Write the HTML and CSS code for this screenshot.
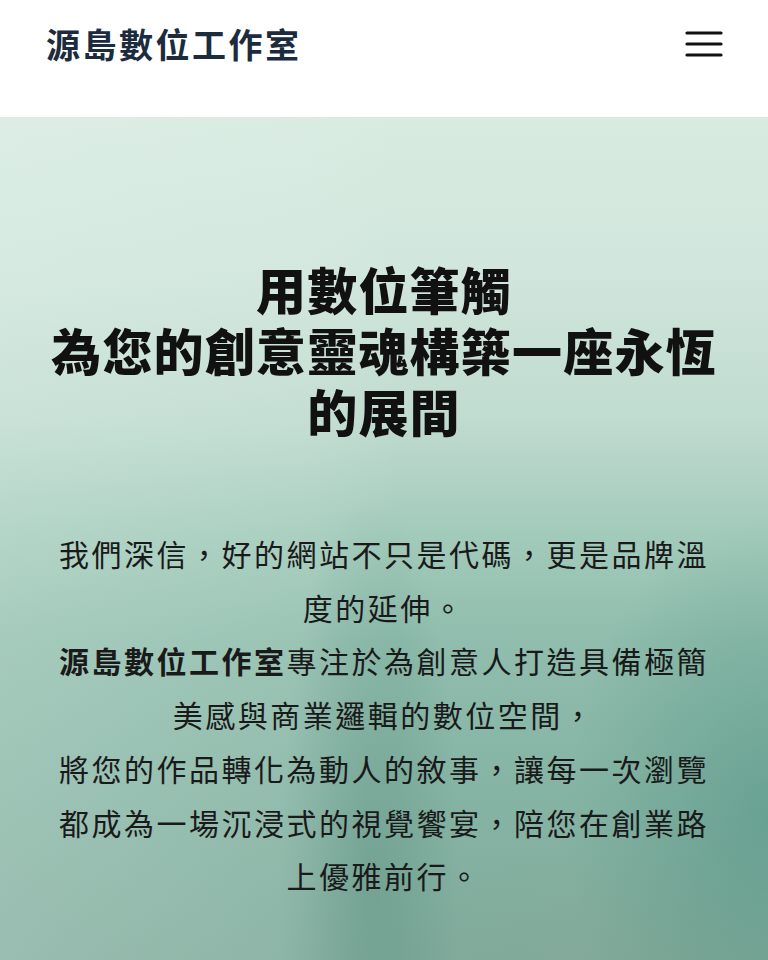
FILE: index.html
```html
<!DOCTYPE html>
<html lang="zh-Hant">
<head>
<meta charset="utf-8">
<title>源島數位工作室</title>
<link rel="stylesheet" href="styles.css">
</head>
<body>
<header class="site-header">
  <div class="logo">源島數位工作室</div>
  <button class="menu-btn" aria-label="選單">
    <svg width="40" height="30" viewBox="0 0 40 30"><path d="M3 4H37M3 15H37M3 26H37" stroke="#111" stroke-width="3.2" stroke-linecap="round" fill="none"/></svg>
  </button>
</header>
<main class="hero">
  <h1 class="hero-title">用數位筆觸<br>為您的創意靈魂構築一座永恆的展間</h1>
  <p class="hero-text">我們深信，好的網站不只是代碼，更是品牌溫度的延伸。<br><strong>源島數位工作室</strong>專注於為創意人打造具備極簡美感與商業邏輯的數位空間，<br>將您的作品轉化為動人的敘事，讓每一次瀏覽都成為一場沉浸式的視覺饗宴，陪您在創業路上優雅前行。</p>
</main>
</body>
</html>
```
FILE: styles.css
```css
html, body {
  margin: 0;
  padding: 0;
}
body {
  font-family: "Noto Sans CJK TC", "Noto Sans CJK SC", sans-serif;
  background: #fff;
  width: 768px;
  height: 960px;
  overflow: hidden;
}
.site-header {
  height: 117px;
  display: flex;
  align-items: center;
  justify-content: space-between;
  padding: 0 44px 0 46px;
  box-sizing: border-box;
  background: #fff;
}
.logo {
  font-size: 34px;
  font-weight: 700;
  letter-spacing: 2.5px;
  color: #1c2b3e;
  margin-top: -31px;
}
.menu-btn {
  border: 0;
  background: none;
  padding: 0;
  margin-top: -29px;
  display: flex;
}
.hero {
  height: 843px;
  box-sizing: border-box;
  padding-top: 141px;
  display: flex;
  flex-direction: column;
  align-items: center;
  text-align: center;
  color: #111;
  background:
    radial-gradient(ellipse 90px 380px at 370px 760px, rgba(80,135,120,0.35), rgba(80,135,120,0) 100%),
    radial-gradient(ellipse 200px 300px at 768px 700px, rgba(70,140,125,0.45), rgba(70,140,125,0) 100%),
    radial-gradient(ellipse 260px 180px at 620px 900px, rgba(140,160,140,0.3), rgba(140,160,140,0) 100%),
    linear-gradient(90deg, rgba(230,245,238,0.25) 0%, rgba(230,245,238,0.12) 40%, rgba(0,0,0,0) 52%, rgba(0,0,0,0) 100%),
    linear-gradient(180deg, #d8ebe1 0%, #d1e6dc 18%, #c0dbcf 36%, #a3cbbb 49%, #90bdad 62%, #86b4a4 80%, #80ab9c 100%);
}
.hero-title {
  margin: 0;
  font-size: 50px;
  line-height: 61px;
  font-weight: 900;
  letter-spacing: 1.2px;
  width: 680px;
}
.hero-text {
  margin: 86px 0 0;
  width: 662px;
  font-size: 30px;
  line-height: 53.7px;
  font-weight: 400;
  letter-spacing: 2.5px;
  color: #1a1a1a;
}
.hero-text strong {
  font-weight: 700;
}
```
